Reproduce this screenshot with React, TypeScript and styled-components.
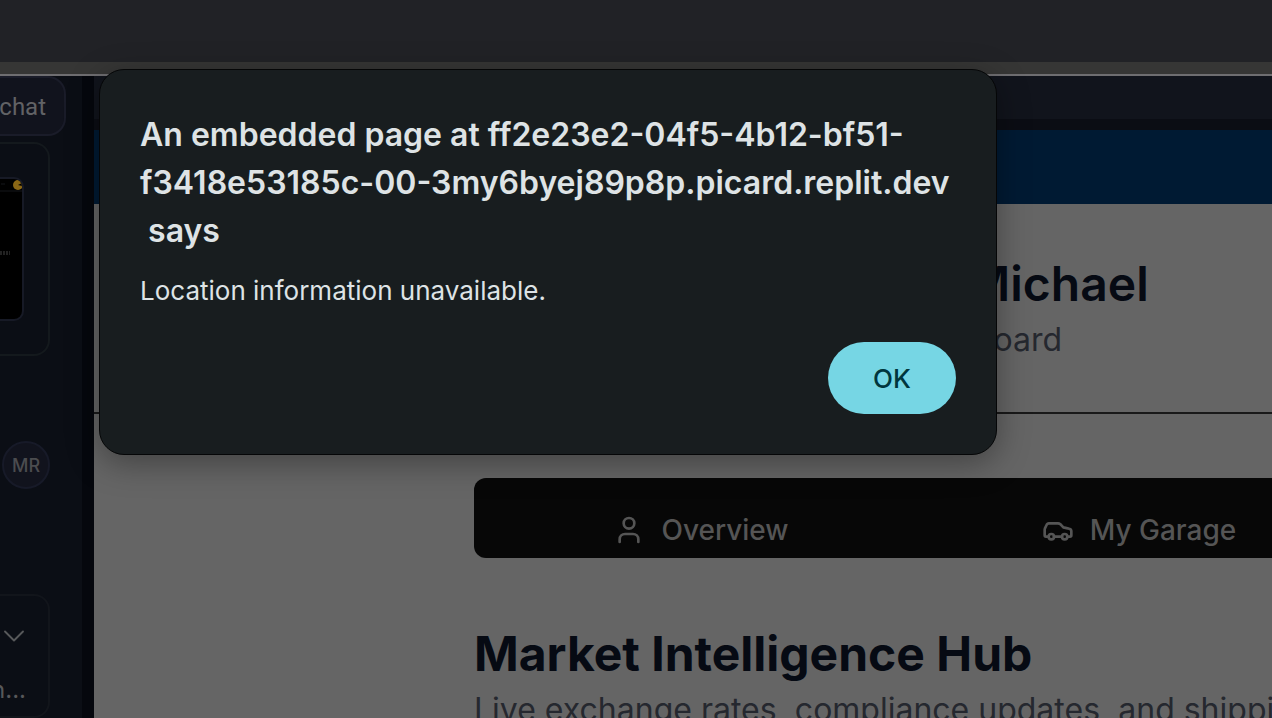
import React from "react";
import styled, { createGlobalStyle } from "styled-components";
import { Car, ChevronDown, User } from "lucide-react";

const GlobalStyle = createGlobalStyle`
  *, *::before, *::after { box-sizing: border-box; }
  body {
    margin: 0;
    background: #0b0e15;
    font-family: Inter, "Liberation Sans", sans-serif;
    overflow: hidden;
  }
  h1, h2, p { margin: 0; }
  button { font: inherit; border: 0; margin: 0; padding: 0; cursor: pointer; }
`;

const Screen = styled.div`
  position: relative;
  height: 100vh;
  display: flex;
  flex-direction: column;
  overflow: hidden;
`;

const BrowserBar = styled.div`
  flex: 0 0 62px;
  background: #212226;
`;

const BookmarkStrip = styled.div`
  flex: 0 0 14px;
  background: #363635;
  border-bottom: 2px solid #6f6e71;
`;

const Workspace = styled.div`
  flex: 1;
  min-height: 0;
  display: flex;
`;

const Sidebar = styled.aside`
  flex: 0 0 94px;
  display: flex;
  flex-direction: column;
  align-items: flex-start;
  background: #0b0e15;
  border-right: 12px solid #05070d;
  overflow: hidden;
`;

const ChatButton = styled.button`
  flex: none;
  width: 66px;
  height: 60px;
  padding: 2px 18px 0 0;
  display: flex;
  align-items: center;
  justify-content: flex-end;
  color: #616265;
  background: #11131d;
  border: 2px solid #1a1c29;
  border-left: 0;
  border-radius: 0 18px 18px 0;
  font-family: Roboto, sans-serif;
  font-size: 24px;
`;

const PreviewCard = styled.div`
  flex: none;
  width: 50px;
  height: 214px;
  margin-top: 6px;
  padding: 33px 24px 33px 0;
  border: 2px solid #14191d;
  border-left: 0;
  border-radius: 0 16px 16px 0;
`;

const Thumbnail = styled.div`
  width: 24px;
  height: 144px;
  background: #000;
  border: 2px solid #171a26;
  border-left: 0;
  border-radius: 0 10px 10px 0;
  overflow: hidden;
`;

const Avatar = styled.div`
  flex: none;
  width: 48px;
  height: 48px;
  margin: 85px 0 0 2px;
  display: flex;
  align-items: center;
  justify-content: center;
  color: #4b4c4f;
  background: #11131d;
  border: 2px solid #171a28;
  border-radius: 50%;
  font-size: 18px;
  font-weight: 500;
`;

const MessageCard = styled.div`
  flex: none;
  width: 50px;
  height: 124px;
  margin-top: 105px;
  padding: 22px 16px 0 0;
  display: flex;
  flex-direction: column;
  align-items: flex-end;
  gap: 20px;
  color: #57585a;
  border: 2px solid #12151b;
  border-left: 0;
  border-radius: 0 16px 16px 0;
  font-size: 24px;
  line-height: 32px;
`;

const MessagePreview = styled.span`
  padding-right: 6px;
`;

const Page = styled.main`
  flex: 1;
  min-width: 0;
  display: flex;
  flex-direction: column;
  background: #656565;
`;

const AddressBar = styled.div`
  flex: 0 0 54px;
  background: #11141c;
  border-bottom: 11px solid #0b0d14;
`;

const SiteHeader = styled.header`
  flex: 0 0 74px;
  background: #001a33;
`;

const Greeting = styled.section`
  flex: 0 0 210px;
  padding: 52px 0 0 872px;
  border-bottom: 2px solid #191919;
`;

const Heading = styled.h1<{ $weight: number }>`
  color: #060a13;
  font-size: 48px;
  line-height: 56px;
  font-weight: ${(p) => p.$weight};
  white-space: nowrap;
`;

const Subtitle = styled.p<{ $indent?: number }>`
  margin-top: 8px;
  padding-left: ${(p) => p.$indent ?? 0}px;
  color: #25282f;
  font-size: 32px;
  line-height: 40px;
  white-space: nowrap;
`;

const Content = styled.section`
  padding: 64px 0 0 380px;
  overflow: hidden;
`;

const Tabs = styled.nav`
  height: 80px;
  padding: 24px 8px 0;
  display: grid;
  grid-template-columns: 438px 438px;
  background: #070707;
  border-radius: 12px 0 0 12px;
  overflow: hidden;
`;

const Tab = styled.button`
  height: 56px;
  display: flex;
  align-items: center;
  justify-content: center;
  gap: 16px;
  color: #555;
  background: transparent;
  font-size: 28px;
  font-weight: 500;
`;

const Hub = styled.div`
  margin-top: 68px;
`;

const Alert = styled.div`
  position: absolute;
  top: 69px;
  left: 99px;
  width: 898px;
  padding: 41px 40px 40px;
  color: #dee3e5;
  background: #181d1f;
  border: 1px solid #050607;
  border-radius: 25px;
  box-shadow: 0 8px 32px rgba(0, 0, 0, 0.35);
`;

const AlertTitle = styled.h2`
  font-size: 32px;
  line-height: 48px;
  font-weight: 600;
  white-space: pre;
`;

const AlertText = styled.p`
  margin-top: 16px;
  font-size: 26px;
  line-height: 40px;
`;

const OkButton = styled.button`
  width: 128px;
  height: 72px;
  margin: 31px 0 0 auto;
  display: block;
  color: #00363d;
  background: #76d6e4;
  border-radius: 36px;
  font-size: 26px;
  font-weight: 500;
`;

export default function App() {
  return (
    <>
      <GlobalStyle />
      <Screen>
        <BrowserBar />
        <BookmarkStrip />
        <Workspace>
          <Sidebar>
            <ChatButton type="button">chat</ChatButton>
            <PreviewCard>
              <Thumbnail>
                <svg width="22" height="140" viewBox="0 0 22 140" aria-hidden="true">
                  <circle cx="18" cy="6" r="5" fill="#8a6716" />
                  <path d="M18 6l4-2v3z" fill="#000" />
                  <path d="M1 5h4M0 12h22" stroke="#15171a" strokeWidth="1" />
                  <path d="M0 73h10M0 75h10" stroke="#454545" strokeWidth="1" strokeDasharray="2 1" />
                </svg>
              </Thumbnail>
            </PreviewCard>
            <Avatar>MR</Avatar>
            <MessageCard>
              <ChevronDown size={36} strokeWidth={1.25} />
              <MessagePreview>n...</MessagePreview>
            </MessageCard>
          </Sidebar>
          <Page>
            <AddressBar />
            <SiteHeader />
            <Greeting>
              <Heading $weight={600}>Michael</Heading>
              <Subtitle $indent={8}>board</Subtitle>
            </Greeting>
            <Content>
              <Tabs>
                <Tab type="button">
                  <User size={32} />
                  Overview
                </Tab>
                <Tab type="button">
                  <Car size={32} />
                  My Garage
                </Tab>
              </Tabs>
              <Hub>
                <Heading as="h2" $weight={700}>Market Intelligence Hub</Heading>
                <Subtitle>Live exchange rates, compliance updates, and shipping</Subtitle>
              </Hub>
            </Content>
          </Page>
        </Workspace>
        <Alert role="alertdialog" aria-labelledby="alert-title" aria-describedby="alert-text">
          <AlertTitle id="alert-title">
            {"An embedded page at ff2e23e2-04f5-4b12-bf51-\nf3418e53185c-00-3my6byej89p8p.picard.replit.dev\n says"}
          </AlertTitle>
          <AlertText id="alert-text">Location information unavailable.</AlertText>
          <OkButton type="button">OK</OkButton>
        </Alert>
      </Screen>
    </>
  );
}
